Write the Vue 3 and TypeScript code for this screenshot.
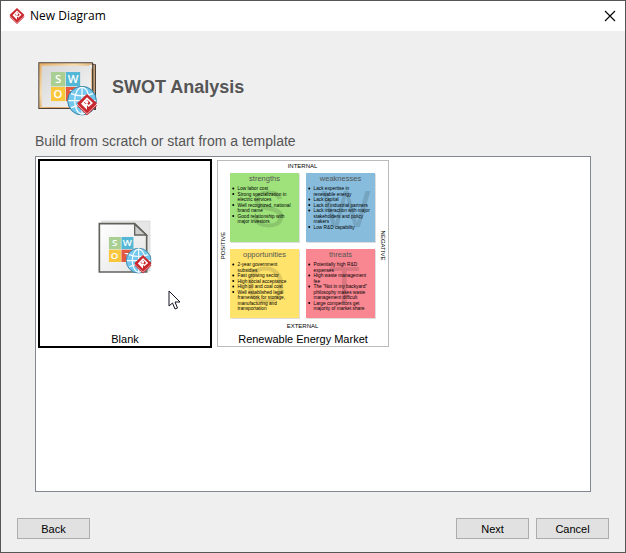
<script setup lang="ts">
import { ref } from 'vue'

interface Quadrant {
  title: string
  letter: string
  color: string
  x: number
  y: number
  titleX: number
  letterX: number
  points: string[][]
}

const quadrants: Quadrant[] = [
  {
    title: 'strengths', letter: 'S', color: '#9fe27c', x: 48, y: 48, titleX: 186, letterX: 200,
    points: [
      ['Low labor cost'],
      ['Strong specialization in', 'electric services'],
      ['Well recognized, national', 'brand name'],
      ['Good relationship with', 'major investors'],
    ],
  },
  {
    title: 'weaknesses', letter: 'W', color: '#87bcdc', x: 352, y: 48, titleX: 490, letterX: 512,
    points: [
      ['Lack expertise in', 'renewable energy'],
      ['Lack capital'],
      ['Lack of industrial partners'],
      ['Lack interaction with major', 'stakeholders and policy', 'makers'],
      ['Low R&D capability'],
    ],
  },
  {
    title: 'opportunities', letter: 'O', color: '#ffe36b', x: 48, y: 352, titleX: 186, letterX: 190,
    points: [
      ['2-year government', 'subsidies'],
      ['Fast growing sector'],
      ['High social acceptance'],
      ['High oil and coal cost'],
      ['Well established legal', 'framework for storage,', 'manufacturing and', 'transportation'],
    ],
  },
  {
    title: 'threats', letter: 'T', color: '#f98791', x: 352, y: 352, titleX: 490, letterX: 506,
    points: [
      ['Potentially high R&D', 'expenses'],
      ['High waste management', 'fee'],
      ['The "Not in my backyard"', 'philosophy makes waste', 'management difficult'],
      ['Large competitors get', 'majority of market share'],
    ],
  },
]

function lines(q: Quadrant) {
  return q.points
    .flatMap((point) => point.map((text, i) => ({ text, bullet: i === 0 })))
    .map((line, i) => ({ ...line, y: q.y + 68 + i * 22 }))
}

const selected = ref('blank')
</script>

<template>
  <main class="dialog">
    <svg class="defs" aria-hidden="true">
      <defs>
        <symbol id="brand" viewBox="0 0 60 64">
          <path d="M30 6 60 35 30 64 0 35z" fill="#c9282e" />
          <path d="M1 31 30 59 59 31" fill="none" stroke="#fff" stroke-width="2" />
          <path d="M30 0 60 28 30 56 0 28z" fill="#c9282e" />
          <path d="M30 10 48 27 35 39 30 34V47L12 29z" fill="#fff" />
          <path d="M31 17 41 27 35 33 30 28 27 31 21 26z" fill="#c9282e" />
          <circle cx="29" cy="24" r="5" fill="#fff" />
        </symbol>
        <symbol id="globe" viewBox="0 0 90 90">
          <circle cx="45" cy="45" r="43" fill="#72c7ed" stroke="#397f9f" stroke-width="3" />
          <g fill="none" stroke="#f4fbff" stroke-width="4">
            <path d="M45 4v82M4 45h82M12 24q33 13 66 0M12 66q33-13 66 0" />
            <ellipse cx="45" cy="45" rx="22" ry="40" />
          </g>
        </symbol>
        <symbol id="swot" viewBox="0 0 88 88">
          <path d="M0 0h43v43H0z" fill="#a9cf92" />
          <path d="M45 0h43v43H45z" fill="#53b7d6" />
          <path d="M0 45h43v43H0z" fill="#fac63c" />
          <path d="M45 45h43v43H45z" fill="#e2593f" />
          <g class="swot-text">
            <text x="21" y="33">S</text><text x="66" y="33">W</text>
            <text x="21" y="78">O</text><text x="66" y="78">T</text>
          </g>
        </symbol>
      </defs>
    </svg>

    <header class="titlebar">
      <svg class="app-icon" aria-hidden="true"><use href="#brand" /></svg>
      <span class="caption">New Diagram</span>
      <button class="close" type="button" aria-label="Close">
        <svg viewBox="0 0 12 12" aria-hidden="true"><path d="M1 1 11 11M11 1 1 11" fill="none" stroke="#000" stroke-width="1.1" /></svg>
      </button>
    </header>

    <section class="content">
      <div class="heading">
        <svg class="heading-icon" viewBox="21 18 180 168" aria-hidden="true">
          <defs>
            <linearGradient id="wood" x1="0" y1="0" x2="1" y2="1">
              <stop offset="0" stop-color="#e5ad63" /><stop offset=".35" stop-color="#f8dcae" />
              <stop offset=".6" stop-color="#dca45e" /><stop offset="1" stop-color="#f2c78c" />
            </linearGradient>
            <linearGradient id="board" x1="0" y1="0" x2="1" y2="1">
              <stop offset="0" stop-color="#d6d6d6" /><stop offset="1" stop-color="#f7f7f7" />
            </linearGradient>
          </defs>
          <path d="M25 22H188L191 28H198V165H192L191 162H25z" fill="#4a4038" />
          <path d="M28 25H186V159H28z" fill="url(#wood)" />
          <path d="M190 30h5v130h-5z" fill="#c3a077" />
          <path d="M35 32H184V156H35z" fill="url(#board)" />
          <path d="M176 30h10v12z" fill="#fff" stroke="#aaa" />
          <use href="#swot" x="63" y="51" width="88" height="88" />
          <use href="#globe" x="111" y="92" width="90" height="90" />
          <use href="#brand" x="141" y="117" width="60" height="64" />
        </svg>
        <h1>SWOT Analysis</h1>
      </div>
      <h2 id="template-heading">Build from scratch or start from a template</h2>

      <div class="templates" role="group" aria-labelledby="template-heading">
        <button class="card" :class="{ selected: selected === 'blank' }" :aria-pressed="selected === 'blank'" type="button" @click="selected = 'blank'">
          <span class="preview">
            <svg class="blank-icon" viewBox="27 27 162 165" aria-hidden="true">
              <defs>
                <linearGradient id="paper" x1="0" y1="0" x2="1" y2="1">
                  <stop offset="0" stop-color="#fff" /><stop offset="1" stop-color="#e3e3e3" />
                </linearGradient>
              </defs>
              <path d="M38 30H183V180H38z" fill="#e6e6e6" stroke="#d2d2d2" stroke-width="2" />
              <path d="M31 38H137L173 73V183H31z" fill="url(#paper)" stroke="#62625d" stroke-width="5" />
              <path d="M137 40V72H172z" fill="#ccc" stroke="#62625d" stroke-width="4" />
              <use href="#swot" x="59" y="78" width="75" height="75" />
              <use href="#globe" x="110" y="110" width="78" height="78" />
              <use href="#brand" x="136" y="132" width="52" height="56" />
            </svg>
          </span>
          <span class="label">Blank</span>
          <svg class="pointer" viewBox="0 0 13 20" aria-hidden="true">
            <path d="M1 1V16L4.500 13 7 19 9.500 18 7 12H12z" fill="#fff" stroke="#111122" />
          </svg>
        </button>

        <button class="card" :class="{ selected: selected === 'energy' }" :aria-pressed="selected === 'energy'" type="button" @click="selected = 'energy'">
          <span class="preview">
            <svg class="diagram" viewBox="0 0 680 688" aria-hidden="true">
              <text class="axis" x="338" y="26">INTERNAL</text>
              <text class="axis" x="338" y="667">EXTERNAL</text>
              <text class="axis" transform="translate(28 338) rotate(-90)">POSITIVE</text>
              <text class="axis" transform="translate(652 338) rotate(90)">NEGATIVE</text>
              <g v-for="q in quadrants" :key="q.title">
                <rect :x="q.x + 4" :y="q.y + 4" width="276" height="276" fill="#dedede" />
                <rect :x="q.x" :y="q.y" width="276" height="276" :fill="q.color" />
                <text class="watermark" :x="q.letterX" :y="q.y + 216">{{ q.letter }}</text>
                <text class="quad-title" :x="q.titleX" :y="q.y + 30">{{ q.title }}</text>
                <g v-for="line in lines(q)" :key="line.y">
                  <circle v-if="line.bullet" :cx="q.x + 13" :cy="line.y - 6" r="4" />
                  <text class="point" :x="q.x + 30" :y="line.y">{{ line.text }}</text>
                </g>
              </g>
            </svg>
          </span>
          <span class="label">Renewable Energy Market</span>
        </button>
      </div>
    </section>

    <footer class="actions">
      <button class="action back" type="button">Back</button>
      <button class="action" type="button">Next</button>
      <button class="action" type="button">Cancel</button>
    </footer>
  </main>
</template>

<style>
body {
  margin: 0;
}
</style>

<style scoped>
.dialog {
  box-sizing: border-box;
  display: flex;
  flex-direction: column;
  min-height: 100vh;
  border: 1px solid #555;
  background: #efefef;
  color: #000;
  font-family: "Liberation Sans", Arial, sans-serif;
}
.defs {
  position: absolute;
  width: 0;
  height: 0;
}
button {
  font: inherit;
  color: inherit;
}
.titlebar {
  display: flex;
  align-items: center;
  height: 30px;
  padding: 0 9px 0 8px;
  background: #fff;
}
.app-icon {
  width: 16px;
  height: 16px;
}
.caption {
  flex: 1;
  margin-left: 5px;
  font: 12px/16px "Open Sans", "Noto Sans", sans-serif;
}
.close {
  display: flex;
  padding: 0;
  border: 0;
  background: none;
}
.close svg {
  width: 12px;
  height: 12px;
}
.content {
  flex: 1;
  display: flex;
  flex-direction: column;
  padding: 30px 34px 0;
}
.heading {
  display: flex;
  align-items: center;
  gap: 15px;
  padding-left: 2px;
}
.heading-icon {
  width: 60px;
  height: 56px;
}
h1 {
  margin: 0 0 4px;
  color: #555;
  font-size: 18px;
  line-height: 22px;
}
h2 {
  margin: 14px 0 5px;
  color: #555;
  font-size: 14px;
  font-weight: normal;
  line-height: 20px;
}
.templates {
  flex: 1;
  display: flex;
  flex-wrap: wrap;
  align-items: flex-start;
  align-content: flex-start;
  gap: 4px;
  padding: 2px;
  border: 1px solid #828790;
  background: #fff;
}
.card {
  position: relative;
  display: flex;
  flex-direction: column;
  margin: 1px;
  padding: 0;
  border: 1px solid #bbb;
  background: #fff;
}
.card.selected {
  margin: 0;
  border: 2px solid #000;
}
.preview {
  display: flex;
  align-items: center;
  justify-content: center;
  width: 170px;
  height: 172px;
}
.label {
  align-self: stretch;
  font-size: 11px;
  line-height: 13px;
  text-align: center;
}
.blank-icon {
  width: 54px;
  height: 55px;
}
.diagram {
  width: 170px;
  height: 172px;
}
.pointer {
  position: absolute;
  top: 129px;
  left: 128px;
  width: 13px;
  height: 20px;
}
.swot-text {
  fill: #fff;
  font: 600 34px "Open Sans", sans-serif;
  text-anchor: middle;
}
.axis {
  font-size: 24px;
  text-anchor: middle;
}
.quad-title {
  fill: #555;
  font-size: 30px;
  text-anchor: middle;
}
.point {
  font-size: 19px;
}
.watermark {
  font-size: 208px;
  fill-opacity: 0.12;
  text-anchor: middle;
}
.actions {
  display: flex;
  gap: 7px;
  padding: 26px 16px 13px;
}
.action {
  width: 73px;
  height: 21px;
  padding: 0;
  border: 1px solid #adadad;
  background: #e1e1e1;
  font-size: 11px;
}
.back {
  margin-right: auto;
}
</style>
